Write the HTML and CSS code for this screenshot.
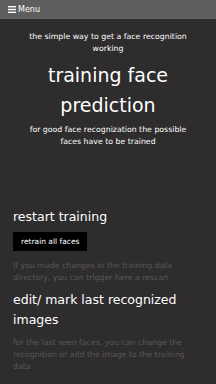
FILE: index.html
```html
<!DOCTYPE html>
<html lang="en">
<head>
    <meta charset="UTF-8">
    <meta name="viewport" content="width=device-width, initial-scale=1.0">
    <title>Face Recognition Training</title>
    <link rel="stylesheet" href="styles.css">
</head>
<body>
<div class="topbar">
    <svg class="burger" width="8" height="7" viewBox="0 0 8 7">
        <rect x="0" y="0" width="8" height="1.4" fill="#fff"/>
        <rect x="0" y="2.8" width="8" height="1.4" fill="#fff"/>
        <rect x="0" y="5.6" width="8" height="1.4" fill="#fff"/>
    </svg>
    <span>Menu</span>
</div>

<div class="hero">
    <p class="sub">the simple way to get a face recognition working</p>
    <h1>training face prediction</h1>
    <p class="sub">for good face recognization the possible faces have to be trained</p>
</div>

<div class="section first">
    <h2>restart training</h2>
    <button type="button">retrain all faces</button>
    <p class="note after-btn">If you made changes in the training data directory, you can trigger here a rescan</p>
</div>

<div class="section">
    <h2>edit/ mark last recognized images</h2>
    <p class="note">for the last seen faces, you can change the recognition or add the image to the training data</p>
</div>
</body>
</html>
```

FILE: styles.css
```css
body {
    margin: 0;
    background: #2e2c2d;
    color: #fff;
    font-family: 'DejaVu Sans', 'Noto Sans', sans-serif;
    min-height: 100vh;
}
.topbar {
    background: #5e5e5e;
    height: 19px;
    display: flex; align-items: center;
    padding-left: 8px; gap: 2px;
    font-size: 8px;
}
.burger { display: block; }
.hero {
    text-align: center;
    padding: 12px 22px 0;
}
.sub {
    font-size: 7.8px; line-height: 12px;
    margin: 0;
}
h1 {
    font-weight: normal; font-size: 19px; line-height: 30px;
    margin: 5px 0 4px;
}
.section { padding: 0 13px; margin-top: 6px; }
.section.first { margin-top: 59px; }
h2 {
    font-weight: normal; font-size: 12.5px; line-height: 20px;
    margin: 0;
}
button {
    display: block; margin-top: 5px;
    background: #000; color: #fff; border: none;
    font-family: inherit; font-size: 7.5px;
    padding: 0 8px; height: 19px;
}
.note {
    color: #5a585a;
    font-size: 7.8px; line-height: 12px;
    margin: 7px 0 0;
}
.note.after-btn { margin-top: 9px; }
```
